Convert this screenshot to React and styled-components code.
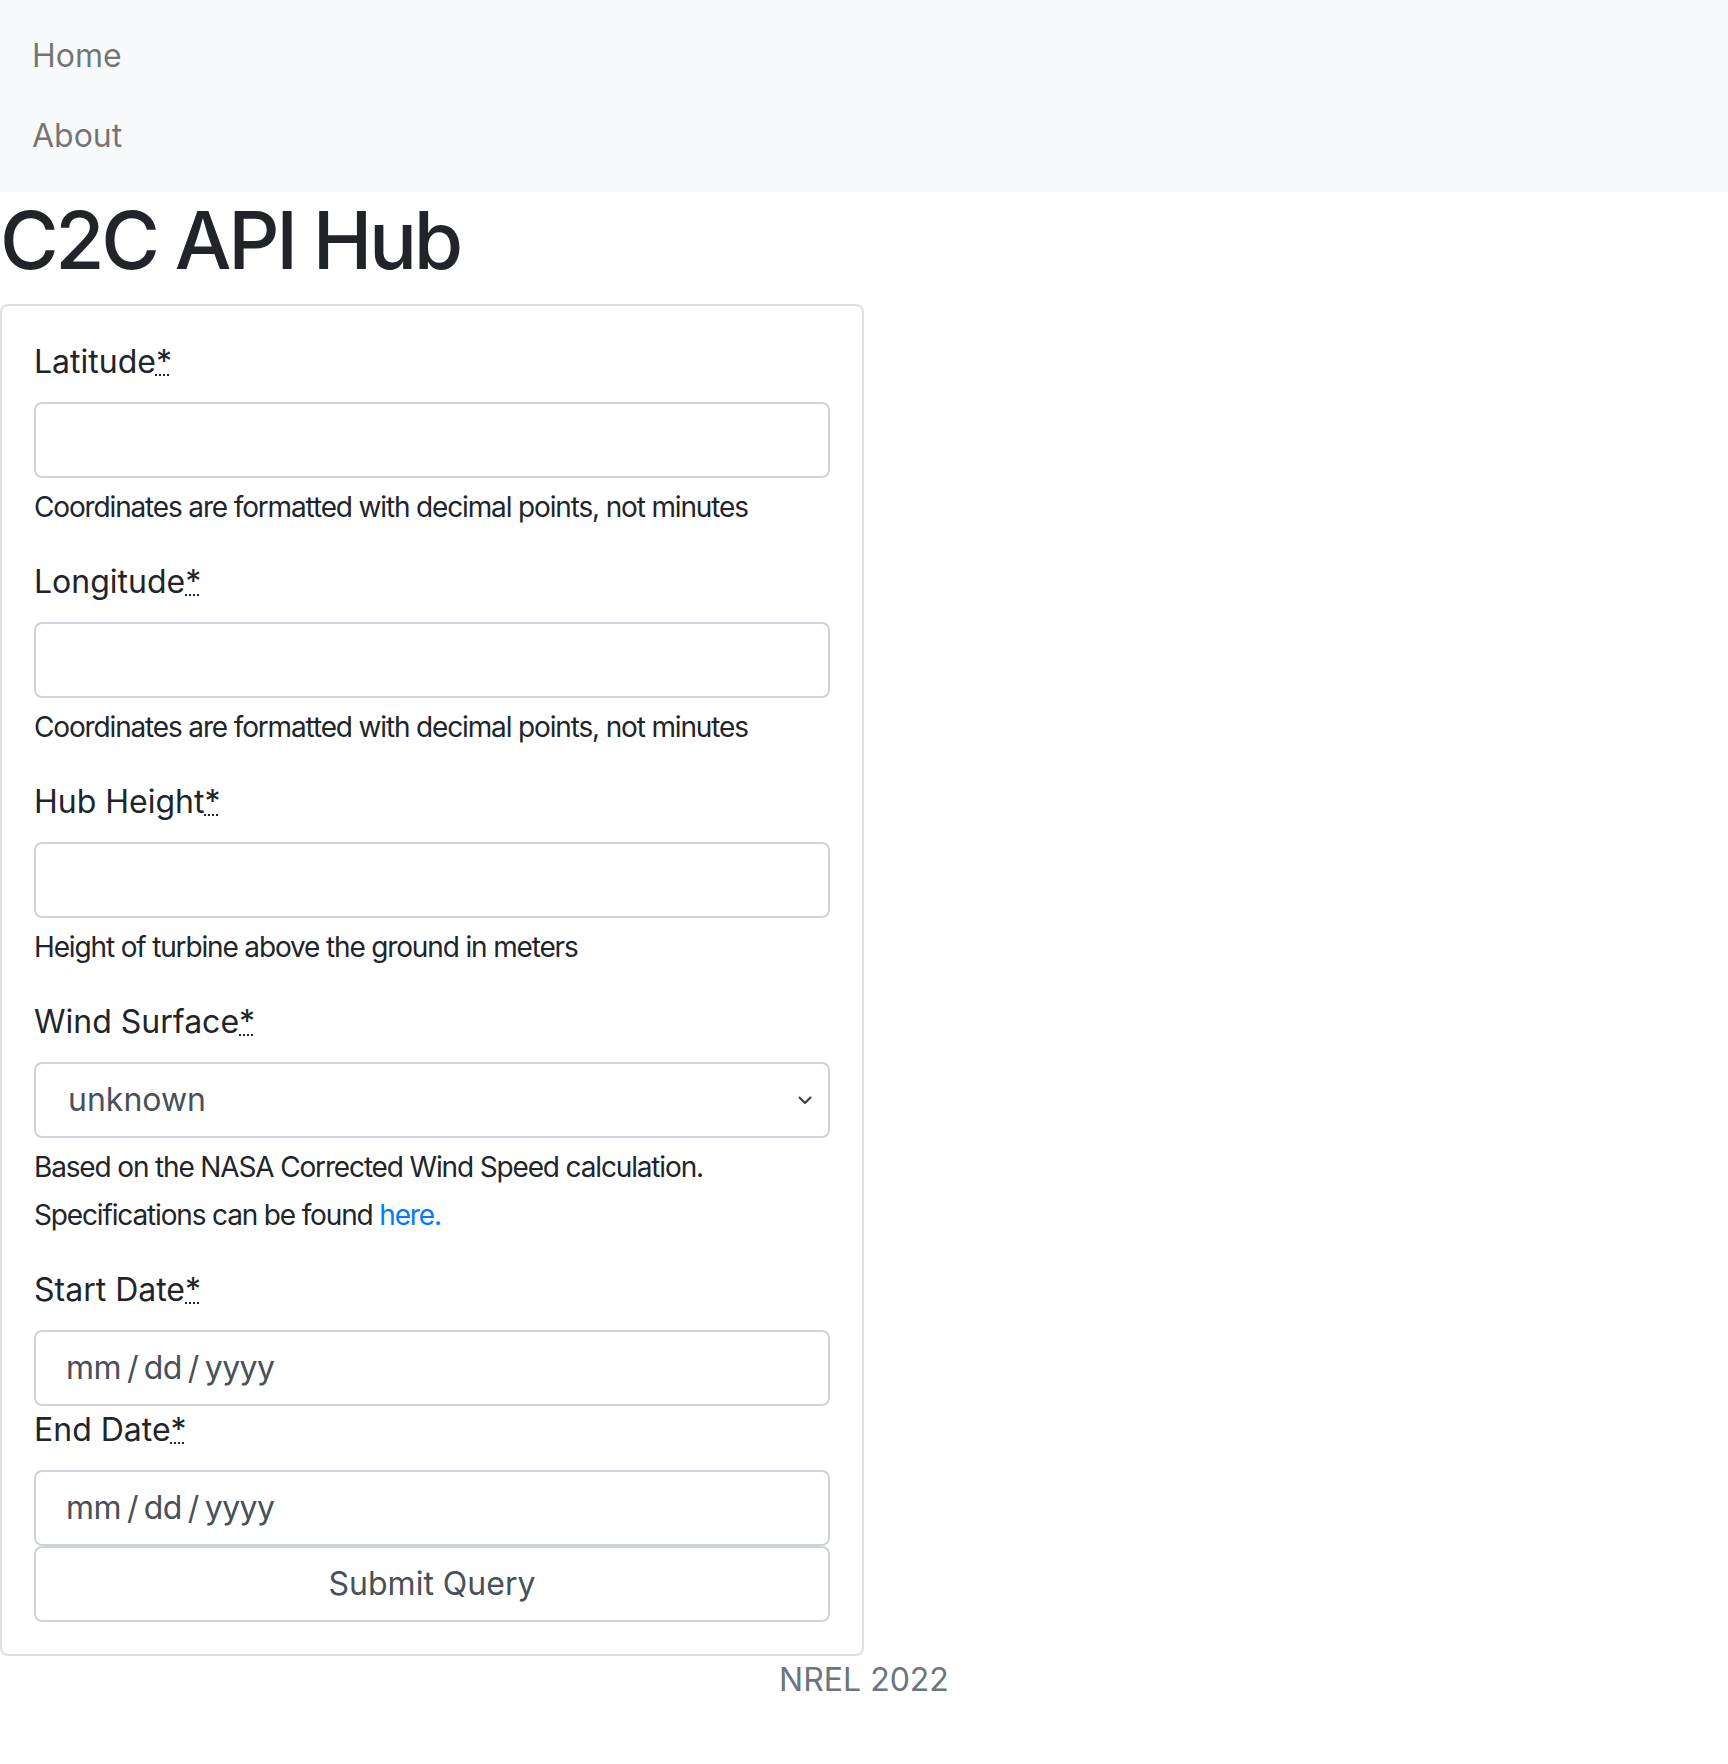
import styled, { createGlobalStyle } from 'styled-components';

const GlobalStyle = createGlobalStyle`
  * { box-sizing: border-box; }
  body {
    margin: 0;
    background: #fff;
    color: #212529;
    font-family: Inter, "Noto Sans", "Liberation Sans", sans-serif;
    font-size: 32px;
    line-height: 48px;
  }
`;

const fields = [
  { id: 'lat', label: 'Latitude', help: 'Coordinates are formatted with decimal points, not minutes' },
  { id: 'lon', label: 'Longitude', help: 'Coordinates are formatted with decimal points, not minutes' },
  { id: 'hub', label: 'Hub Height', help: 'Height of turbine above the ground in meters' },
];

export default function App() {
  return (
    <>
      <GlobalStyle />
      <S.Navbar>
        <S.NavLink href='#'>Home</S.NavLink>
        <S.NavLink href='#'>About</S.NavLink>
      </S.Navbar>
      <S.Title>C2C API Hub</S.Title>
      <S.Card>
        {fields.map((f) => (
          <S.Group key={f.id}>
            <Label text={f.label} />
            <S.Input type='text' />
            <S.Help>{f.help}</S.Help>
          </S.Group>
        ))}
        <S.Group>
          <Label text='Wind Surface' />
          <S.SelectBox>
            <span>unknown</span>
            <svg width='14' height='9' viewBox='0 0 14 9' fill='none'>
              <path d='M1.5 1.5 7 7l5.5-5.5' stroke='#343a40' strokeWidth='2' strokeLinecap='round' strokeLinejoin='round' />
            </svg>
          </S.SelectBox>
          <S.Help>Based on the NASA Corrected Wind Speed calculation.</S.Help>
          <S.Help $spaced>
            Specifications can be found <S.Link href='#'>here.</S.Link>
          </S.Help>
        </S.Group>
        <Label text='Start Date' />
        <DateField />
        <Label text='End Date' />
        <DateField />
        <S.Submit type='button'>Submit Query</S.Submit>
      </S.Card>
      <S.Footer>NREL 2022</S.Footer>
    </>
  );
}

function Label({ text }) {
  return (
    <S.Label>
      {text}
      <S.Abbr title='required'>*</S.Abbr>
    </S.Label>
  );
}

function DateField() {
  return (
    <S.DateBox>
      <span>mm</span>
      <S.Slash>/</S.Slash>
      <span>dd</span>
      <S.Slash>/</S.Slash>
      <span>yyyy</span>
    </S.DateBox>
  );
}

const S = {};

S.Navbar = styled.nav`
  display: flex;
  flex-direction: column;
  padding: 16px 32px;
  background: #f8f9fa;
`;

S.NavLink = styled.a`
  display: block;
  padding: 16px 0;
  font-size: 32px;
  line-height: 48px;
  color: rgba(0, 0, 0, 0.55);
  text-decoration: none;
`;

S.Title = styled.h1`
  margin: 0 0 16px;
  font-size: 80px;
  line-height: 96px;
  font-weight: 500;
  letter-spacing: -3.3px;
`;

S.Card = styled.div`
  width: 864px;
  display: flex;
  flex-direction: column;
  padding: 32px;
  border: 2px solid rgba(0, 0, 0, 0.125);
  border-radius: 8px;
`;

S.Group = styled.div`
  display: flex;
  flex-direction: column;
  margin-bottom: 30px;
`;

S.Label = styled.label`
  display: block;
  margin-bottom: 16px;
  font-size: 32px;
  line-height: 48px;
`;

S.Abbr = styled.abbr`
  text-decoration: underline dotted;
  text-decoration-thickness: 2px;
  cursor: help;
`;

const fieldBox = `
  width: 100%;
  height: 76px;
  border: 2px solid #ced4da;
  border-radius: 8px;
  background: #fff;
  color: #495057;
  font-family: inherit;
  font-size: 32px;
  line-height: 48px;
`;

S.Input = styled.input`
  ${fieldBox}
  padding: 12px 24px;
  outline: none;
`;

S.SelectBox = styled.div`
  ${fieldBox}
  display: flex;
  align-items: center;
  justify-content: space-between;
  padding: 12px 16px 12px 32px;
`;

S.DateBox = styled.div`
  ${fieldBox}
  display: flex;
  align-items: center;
  gap: 5px;
  padding: 12px 30px;
  letter-spacing: -0.6px;
`;

S.Slash = styled.span`
  padding: 0 1px;
`;

S.Help = styled.small`
  display: block;
  margin-top: ${(p) => (p.$spaced ? '6px' : '8px')};
  font-size: 28px;
  line-height: 42px;
  letter-spacing: -1.15px;
  color: #212529;
`;

S.Link = styled.a`
  color: #007bff;
  text-decoration: none;
`;

S.Submit = styled.button`
  ${fieldBox}
  padding: 12px 24px;
  text-align: center;
  cursor: pointer;
`;

S.Footer = styled.footer`
  text-align: center;
  font-size: 32px;
  line-height: 48px;
  color: #6c757d;
`;
